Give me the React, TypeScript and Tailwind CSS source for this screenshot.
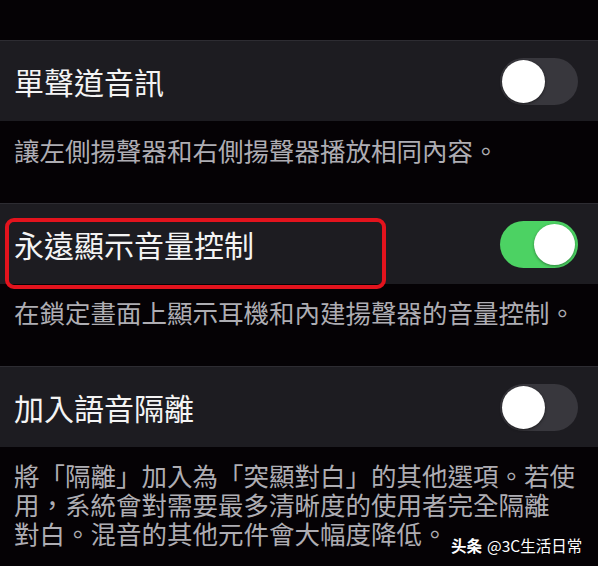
import React from "react";

function Toggle({ on }: { on: boolean }) {
  return on ? (
    <div className="w-[78px] h-[47px] rounded-full bg-[#4cd263] flex items-center justify-end pr-[3px]">
      <div className="w-[41px] h-[41px] rounded-full bg-white shadow-[0_1px_3px_rgba(0,0,0,0.4)]" />
    </div>
  ) : (
    <div className="w-[78px] h-[47px] rounded-full bg-[#38373d] flex items-center pl-[2px]">
      <div className="w-[43px] h-[43px] rounded-full bg-white shadow-[0_1px_3px_rgba(0,0,0,0.5)]" />
    </div>
  );
}

function Row({ title, on, children }: { title: string; on: boolean; children?: React.ReactNode }) {
  return (
    <div className="relative h-[81px] bg-[#1d1c21] border-t border-[#2d2c32] flex items-center justify-between pl-[14px] pr-[20px]">
      <span className="text-[30px] leading-none text-[#f4f4f4]">{title}</span>
      <Toggle on={on} />
      {children}
    </div>
  );
}

export default function App() {
  return (
    <div
      className="relative w-[598px] h-[566px] overflow-hidden bg-[#050205]"
      style={{ fontFamily: "'Noto Sans CJK TC', 'Noto Sans CJK SC', sans-serif" }}
    >
      <div className="h-[40px]" />
      <Row title="單聲道音訊" on={false} />
      <div className="h-[82px] pt-[14px] pl-[14px] text-[25.5px] leading-[29px] text-[#aeadb3] whitespace-nowrap">
        讓左側揚聲器和右側揚聲器播放相同內容。
      </div>
      <Row title="永遠顯示音量控制" on={true}>
        <div className="absolute top-[14px] left-[5px] w-[381px] h-[71px] border-[4px] border-[#e3131d] rounded-[9px]" />
      </Row>
      <div className="h-[82px] pt-[13px] pl-[14px] text-[25.5px] leading-[29px] text-[#aeadb3] whitespace-nowrap">
        在鎖定畫面上顯示耳機和內建揚聲器的音量控制。
      </div>
      <Row title="加入語音隔離" on={false} />
      <div className="pt-[13px] pl-[14px] text-[25.5px] leading-[29px] text-[#aeadb3] whitespace-nowrap">
        將「隔離」加入為「突顯對白」的其他選項。若使
        <br />
        用，系統會對需要最多清晰度的使用者完全隔離
        <br />
        對白。混音的其他元件會大幅度降低。
      </div>
      <div className="absolute left-[451px] top-[535px] flex items-center gap-[5px] text-white text-[15.5px] leading-[20px] whitespace-nowrap">
        <span className="font-bold">头条</span>
        <span>@3C生活日常</span>
      </div>
    </div>
  );
}
